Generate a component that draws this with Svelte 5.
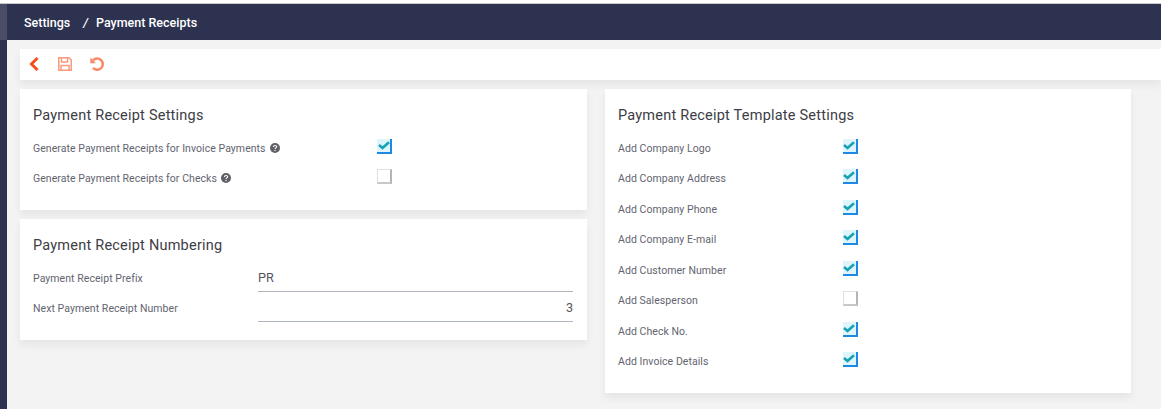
<script>
  const receiptOptions = [
    { label: 'Generate Payment Receipts for Invoice Payments', checked: true },
    { label: 'Generate Payment Receipts for Checks', checked: false }
  ];

  const templateOptions = [
    { label: 'Add Company Logo', checked: true },
    { label: 'Add Company Address', checked: true },
    { label: 'Add Company Phone', checked: true },
    { label: 'Add Company E-mail', checked: true },
    { label: 'Add Customer Number', checked: true },
    { label: 'Add Salesperson', checked: false },
    { label: 'Add Check No.', checked: true },
    { label: 'Add Invoice Details', checked: true }
  ];
</script>

{#snippet checkbox(checked)}
  <span class="checkbox" class:checked>
    {#if checked}
      <svg width="12" height="9" viewBox="0 0 12 9">
        <path d="M1 4 L4.5 7 L11 1.2" fill="none" stroke="#17a2b8" stroke-width="2.6" />
      </svg>
    {/if}
  </span>
{/snippet}

<div class="page">
  <aside class="sidebar"><div class="sidebar-top"></div></aside>
  <div class="main">
    <header class="topbar">
      <span>Settings</span>
      <span class="slash">/</span>
      <span>Payment Receipts</span>
    </header>

    <div class="content">
      <div class="toolbar">
        <svg class="back" width="11" height="14" viewBox="0 0 11 14">
          <path d="M8.5 1 L2.5 7 L8.5 13" fill="none" stroke="#f4511e" stroke-width="3" />
        </svg>
        <svg class="save" width="14" height="14" viewBox="0 0 14 14">
          <path d="M0.75 0.75 H11 L13.25 3 V13.25 H0.75 Z" fill="none" stroke="#fb9a7d" stroke-width="1.5" />
          <path d="M3.5 1 V5 H9.5 V1 M3 13 V8.5 H11 V13" fill="none" stroke="#fb9a7d" stroke-width="1.5" />
        </svg>
        <svg class="undo" width="14" height="14" viewBox="0 0 14 14">
          <path d="M3 3.4 A5.6 5.6 0 1 1 3 10.9" fill="none" stroke="#fb8a68" stroke-width="2.6" />
          <path d="M0.3 0.5 V6.2 H6 Z" fill="#fb8a68" />
        </svg>
      </div>

      <div class="columns">
        <div class="left">
          <section class="card settings">
            <h3>Payment Receipt Settings</h3>
            {#each receiptOptions as option}
              <div class="row">
                <div class="label-cell">
                  <span class="label">{option.label}</span>
                  <svg class="help" width="10" height="10" viewBox="0 0 10 10">
                    <circle cx="5" cy="5" r="5" fill="#5f6068" />
                    <path d="M3.4 3.9 C3.4 2.1 6.7 2.1 6.7 3.8 C6.7 4.9 5 4.9 5 6.1" fill="none" stroke="#fff" stroke-width="1.1" />
                    <rect x="4.4" y="6.9" width="1.2" height="1.2" fill="#fff" />
                  </svg>
                </div>
                {@render checkbox(option.checked)}
              </div>
            {/each}
          </section>

          <section class="card numbering">
            <h3>Payment Receipt Numbering</h3>
            <div class="field">
              <span class="label">Payment Receipt Prefix</span>
              <div class="input">PR</div>
            </div>
            <div class="field">
              <span class="label">Next Payment Receipt Number</span>
              <div class="input number">3</div>
            </div>
          </section>
        </div>

        <section class="card template">
          <h3>Payment Receipt Template Settings</h3>
          {#each templateOptions as option}
            <div class="row template-row">
              <span class="label">{option.label}</span>
              {@render checkbox(option.checked)}
            </div>
          {/each}
        </section>
      </div>
    </div>
  </div>
</div>

<style>
  :global(body) {
    background: #f3f3f3;
    overflow: hidden;
  }

  .page {
    display: flex;
    height: 409px;
    border-top: 3px solid #fff;
    box-sizing: border-box;
    font-family: Roboto, "Liberation Sans", sans-serif;
    background: #f3f3f3;
  }

  .sidebar {
    width: 7px;
    background: #2d3250;
    flex-shrink: 0;
  }

  .sidebar-top {
    height: 37px;
    background: #4b4d66;
    border-top: 1px solid #c8c8c8;
    box-sizing: border-box;
  }

  .main {
    flex: 1;
    min-width: 0;
  }

  .topbar {
    height: 37px;
    box-sizing: border-box;
    border-top: 1px solid #c8c8c8;
    background: #2d3250;
    color: #fff;
    display: flex;
    align-items: center;
    padding-left: 17px;
    font-size: 12.5px;
    font-weight: 500;
  }

  .slash {
    margin: 0 8px 0 13px;
    font-style: italic;
  }

  .content {
    padding: 9px 0 0 13px;
  }

  .toolbar {
    height: 31px;
    box-sizing: border-box;
    padding-bottom: 2px;
    background: #fff;
    display: flex;
    align-items: center;
    box-shadow: 0 5px 8px rgba(0, 0, 0, 0.06);
  }

  .back {
    margin-left: 9px;
  }

  .save {
    margin-left: 18px;
  }

  .undo {
    margin-left: 18px;
  }

  .columns {
    display: flex;
    gap: 18px;
    margin-top: 9px;
    align-items: flex-start;
  }

  .left {
    width: 567px;
    display: flex;
    flex-direction: column;
    gap: 9px;
  }

  .card {
    background: #fff;
    box-sizing: border-box;
    padding: 0 13px;
    box-shadow: 0 5px 8px rgba(0, 0, 0, 0.06);
  }

  .settings {
    height: 121px;
  }

  .numbering {
    height: 121px;
    padding-right: 14px;
  }

  .template {
    width: 526px;
    height: 304px;
  }

  .template h3 {
    height: 44.3px;
  }

  h3 {
    margin: 0;
    padding-top: 18px;
    height: 44px;
    box-sizing: border-box;
    font-size: 14.5px;
    line-height: 18px;
    font-weight: 400;
    letter-spacing: 0.22px;
    color: #3d3d45;
  }

  .row {
    display: flex;
    align-items: center;
    height: 30px;
  }

  .template-row {
    height: 30.43px;
  }

  .template-row .checkbox {
    margin-top: -4px;
    margin-left: -0.5px;
  }

  .label-cell {
    width: 344px;
    display: flex;
    align-items: center;
    gap: 4px;
  }

  .template-row .label {
    width: 225px;
  }

  .label {
    font-size: 10.5px;
    color: #63646f;
    letter-spacing: 0.06px;
  }

  .help {
    flex-shrink: 0;
  }

  .checkbox {
    width: 15px;
    height: 15px;
    margin-top: -3px;
    box-sizing: border-box;
    display: flex;
    align-items: center;
    justify-content: center;
    background: #fff;
    border: 1px solid #e0e0e0;
    border-right: 2px solid #b5b5b5;
    border-bottom: 2px solid #c8c8c8;
  }

  .checkbox.checked {
    background: #def6fb;
    border: none;
    border-right: 2px solid #1e88e5;
    border-bottom: 2px solid #1e88e5;
  }

  .field {
    display: flex;
    height: 30px;
    align-items: center;
  }

  .field .label {
    width: 225px;
  }

  .input {
    flex: 1;
    align-self: flex-start;
    height: 29px;
    line-height: 30px;
    box-sizing: border-box;
    border-bottom: 1px solid #aeb4bc;
    font-size: 12.6px;
    color: #55555d;
  }

  .number {
    text-align: right;
  }
</style>
